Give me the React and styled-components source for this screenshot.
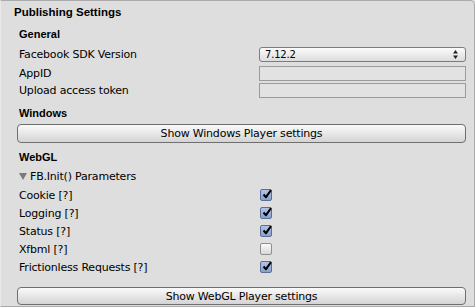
import React from "react";
import styled, { createGlobalStyle } from "styled-components";

const GlobalStyle = createGlobalStyle`
  html, body {
    margin: 0;
    padding: 0;
    background: #dedede;
  }
  body {
    font-family: "DejaVu Sans", "Liberation Sans", sans-serif;
    font-size: 11px;
    letter-spacing: -0.2px;
    color: #000;
  }
`;

const Panel = styled.div`
  box-sizing: border-box;
  width: 475px;
  height: 307px;
  border: 1px solid #aaaaaa;
  border-left-color: #e8e8e8;
  border-radius: 0 5px 0 0;
  background: #dedede;
  padding: 2px 8px 0 13px;
  display: flex;
  flex-direction: column;
`;

const Title = styled.div`
  font-family: "Liberation Sans", Arial, sans-serif;
  font-weight: bold;
  font-size: 11.5px;
  letter-spacing: 0;
  height: 18px;
  line-height: 18px;
`;

const Section = styled.div`
  padding-left: 5px;
  display: flex;
  flex-direction: column;
`;

const Heading = styled.div`
  font-family: "Liberation Sans", Arial, sans-serif;
  font-weight: bold;
  font-size: 11px;
  letter-spacing: 0;
  height: 20px;
  line-height: 20px;
  margin-top: ${(p) => p.gap ?? 4}px;
`;

const Row = styled.div`
  display: flex;
  align-items: center;
  height: ${(p) => p.h || 18}px;
`;

const Label = styled.div`
  width: 240px;
  flex-shrink: 0;
  white-space: nowrap;
`;

const Select = styled.div`
  box-sizing: border-box;
  width: 207px;
  height: 15px;
  border: 1px solid #7c7c7c;
  border-radius: 3px;
  background: linear-gradient(#fbfbfb, #dcdcdc);
  display: flex;
  align-items: center;
  justify-content: space-between;
  padding: 0 7px 0 5px;
  font-size: 10px;
`;

const Arrows = styled.svg`
  width: 5px;
  height: 9px;
`;

const TextField = styled.div`
  box-sizing: border-box;
  width: 207px;
  height: 15px;
  border: 1px solid #9b9b9b;
  background: #e2e2e2;
`;

const Button = styled.div`
  box-sizing: border-box;
  margin-left: -2px;
  margin-top: ${(p) => p.gap || 0}px;
  width: 449px;
  height: ${(p) => p.h || 19}px;
  border: 1px solid #6f6f6f;
  border-radius: 4px;
  background: linear-gradient(#fafafa, #d4d4d4);
  display: flex;
  align-items: center;
  justify-content: center;
`;

const Foldout = styled.div`
  display: flex;
  align-items: center;
  gap: 3px;
  height: 19px;
`;

const Tri = styled.svg`
  width: 8px;
  height: 7px;
`;

const Check = styled.div`
  box-sizing: border-box;
  margin-left: 1px;
  width: 12px;
  height: 12px;
  border: 1px solid ${(p) => (p.on ? "#5a6f93" : "#8f8f8f")};
  border-radius: 2px;
  background: ${(p) =>
    p.on ? "linear-gradient(#b0c4e6, #86a2cf)" : "linear-gradient(#fafafa, #d8d8d8)"};
  position: relative;
`;

const Tick = styled.svg`
  position: absolute;
  left: 1px;
  top: -1px;
  width: 10px;
  height: 10px;
`;

const CheckBox = ({ on }) => (
  <Check on={on ? 1 : 0}>
    {on && (
      <Tick viewBox="0 0 10 10">
        <path d="M1.5 5.5 L4 8.2 L9 1.2" fill="none" stroke="#000" strokeWidth="2" strokeLinejoin="round" />
      </Tick>
    )}
  </Check>
);

const params = [
  ["Cookie [?]", true],
  ["Logging [?]", true],
  ["Status [?]", true],
  ["Xfbml [?]", false],
  ["Frictionless Requests [?]", true],
];

export default function App() {
  return (
    <>
      <GlobalStyle />
      <Panel>
        <Title>Publishing Settings</Title>
        <Section>
          <Heading gap={3}>General</Heading>
          <Row h={20}>
            <Label>Facebook SDK Version</Label>
            <Select>
              <span>7.12.2</span>
              <Arrows viewBox="0 0 5 9">
                <path d="M0 3.5 L2.5 0 L5 3.5 Z M0 5.5 L2.5 9 L5 5.5 Z" fill="#222" />
              </Arrows>
            </Select>
          </Row>
          <Row h={18}>
            <Label>AppID</Label>
            <TextField />
          </Row>
          <Row h={17}>
            <Label>Upload access token</Label>
            <TextField />
          </Row>
          <Heading>Windows</Heading>
          <Button gap={1}>Show Windows Player settings</Button>
          <Heading>WebGL</Heading>
          <Foldout>
            <Tri viewBox="0 0 8 7">
              <path d="M0 0 L8 0 L4 7 Z" fill="#7a7a7a" />
            </Tri>
            FB.Init() Parameters
          </Foldout>
          {params.map(([name, on]) => (
            <Row key={name}>
              <Label>{name}</Label>
              <CheckBox on={on} />
            </Row>
          ))}
          <Button gap={11} h={18}>Show WebGL Player settings</Button>
        </Section>
      </Panel>
    </>
  );
}
